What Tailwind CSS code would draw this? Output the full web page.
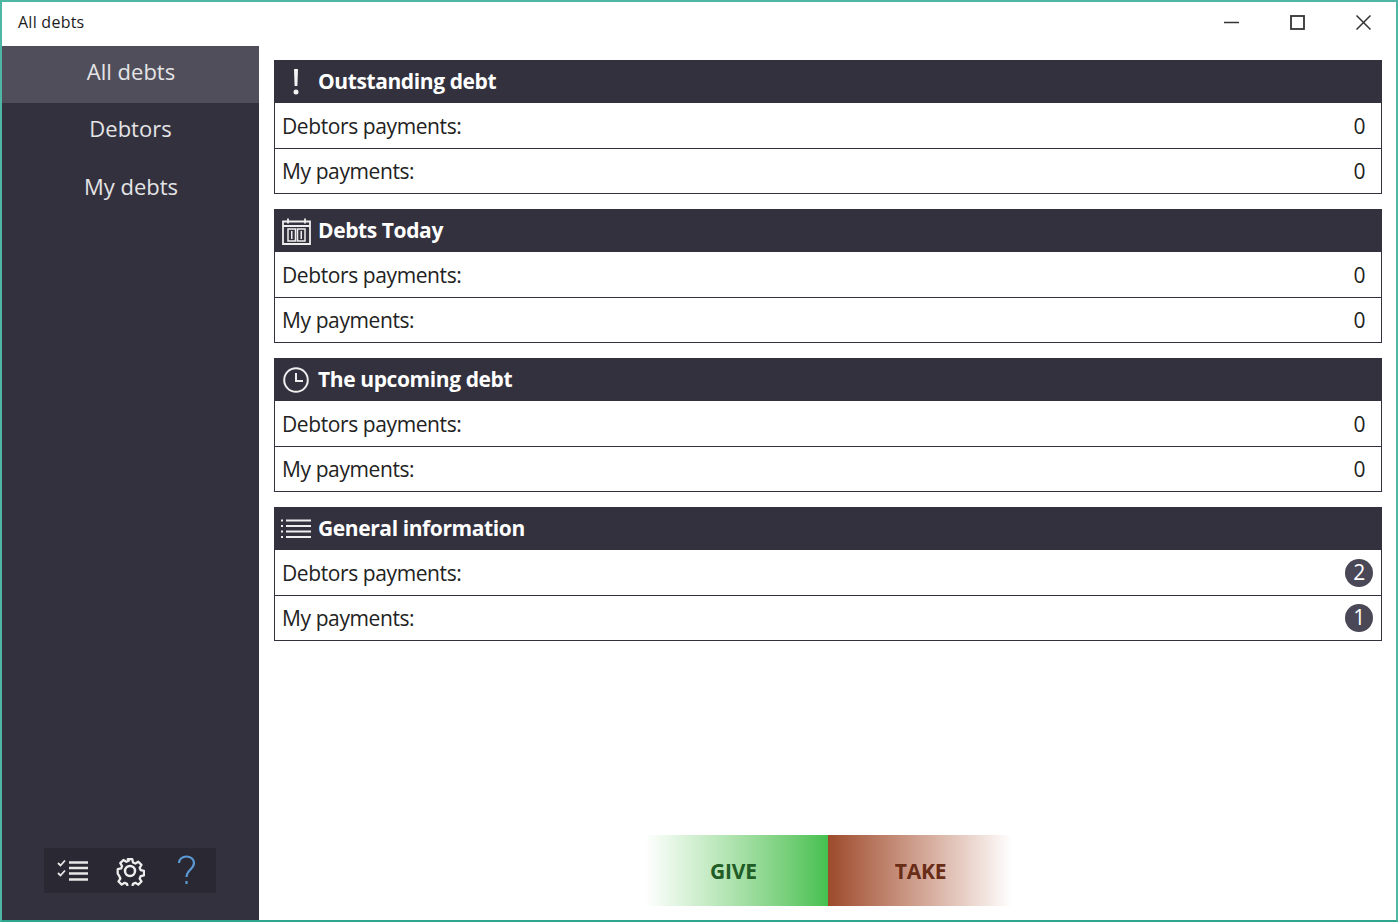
<!DOCTYPE html>
<html lang="en">
<head>
  <meta charset="UTF-8" />
  <title>All debts</title>
  <script src="https://cdn.jsdelivr.net/npm/@tailwindcss/browser@4"></script>
</head>
<body class="bg-white font-['Open_Sans',sans-serif] text-[#222]">
  <div class="h-[922px] w-[1398px] flex flex-col overflow-hidden border-2 border-[#4fb5a5] border-b-[#2fa58f]">

    <!-- Title bar -->
    <div class="h-[44px] shrink-0 flex items-center justify-between pb-[3px]">
      <span class="ml-[16px] mb-[2px] text-[16px] tracking-[0.25px] text-[#1c1c1c]">All debts</span>
      <div class="flex items-center gap-[51px] mr-[25px]">
        <svg width="15" height="15" viewBox="0 0 15 15" fill="none" stroke="#333" stroke-width="1.5"><path d="M0 7.500h15"/></svg>
        <svg width="15" height="15" viewBox="0 0 15 15" fill="none" stroke="#333" stroke-width="1.8"><rect x="1" y="1" width="13" height="13"/></svg>
        <svg width="15" height="15" viewBox="0 0 15 15" fill="none" stroke="#333" stroke-width="1.5"><path d="M.5.500l14 14M14.500.500l-14 14"/></svg>
      </div>
    </div>

    <div class="flex-1 flex min-h-0">
      <!-- Sidebar -->
      <aside class="w-[257px] shrink-0 bg-[#33313d] flex flex-col items-center text-[22px] text-[#e4e4e6]">
        <div class="w-full h-[57px] flex items-center justify-center pb-[7px] pl-[1px] bg-[#504e5a]">All debts</div>
        <div class="w-full h-[57px] flex items-center justify-center pb-[7px]">Debtors</div>
        <div class="w-full h-[58px] flex items-center justify-center pb-[5px] pl-[1px]">My debts</div>
        <div class="mt-auto mb-[27px] self-start ml-[42px] w-[172px] h-[45px] bg-[#2a2832] flex items-center pl-[13px]">
          <svg class="mr-[26px]" width="32" height="26" viewBox="0 0 32 26" fill="none" stroke="#e8e8e8">
            <path stroke-width="1.800" d="M1 5l2.500 2.500L8 2.500M1 15l2.500 2.500L8 12.500"/>
            <path stroke-width="2.500" d="M12 4.500h19M12 10h19M12 15.500h19M12 21.500h19"/>
          </svg>
          <svg class="mr-[31px]" width="30" height="30" viewBox="0 0 30 30" fill="none" stroke="#eee" stroke-width="2.500" stroke-linejoin="round">
            <circle cx="15" cy="15" r="5"/>
            <path d="M12.500 2h5l.8 3.700 2.600 1.100 3.200-2 3.500 3.500-2 3.200 1.100 2.600 3.700.8v5l-3.700.8-1.100 2.600 2 3.200-3.500 3.500-3.200-2-2.600 1.100-.8 3.700h-5l-.8-3.700-2.600-1.100-3.200 2-3.500-3.500 2-3.200-1.100-2.600L1.500 18v-5l3.700-.8 1.100-2.600-2-3.200 3.500-3.500 3.200 2 2.600-1.100z" transform="translate(1.350 1.350) scale(.91)"/>
          </svg>
          <svg width="22" height="32" viewBox="0 0 22 32" fill="none" stroke="#5b9bd5" stroke-width="2.200"><path d="M3 8c0-4 3.500-6.500 7.500-6.500S18 4 18 8c0 6-7.500 7-7.500 14"/><path d="M10.500 26v3"/></svg>
        </div>
      </aside>

      <!-- Main -->
      <main class="flex-1 flex flex-col pl-[15px] pr-[14px] pt-[14px] pb-[14px]">
        <section class="border border-[#33313d] mb-[15px]">
          <div class="h-[42px] bg-[#33313d] flex items-center text-white font-bold text-[21px] tracking-[-0.4px]">
            <span class="w-[43px] pr-[2px] flex justify-center"><svg width="6" height="26" viewBox="0 0 6 26" fill="#f4f4f4"><path d="M1 0h4l-.6 17H1.600z"/><circle cx="3" cy="23" r="2.500"/></svg></span>Outstanding debt
          </div>
          <div class="h-[46px] flex items-center justify-between pt-[2px] pl-[7px] pr-[16px] text-[21px] tracking-[-0.4px] border-b border-[#33313d]"><span>Debtors payments:</span><span>0</span></div>
          <div class="h-[44px] flex items-center justify-between pt-[2px] pl-[7px] pr-[16px] text-[21px] tracking-[-0.4px]"><span>My payments:</span><span>0</span></div>
        </section>

        <section class="border border-[#33313d] mb-[15px]">
          <div class="h-[42px] bg-[#33313d] flex items-center text-white font-bold text-[21px] tracking-[-0.4px]">
            <span class="w-[43px] flex justify-center"><svg width="29" height="27" viewBox="0 0 29 27" fill="none" stroke="#eee" stroke-width="1.800"><path d="M1 3.500h27v22.500H1zM1 8h27M6 .5v5M23 .5v5"/><path d="M6 11h7.500v12H6zM15.500 11H23v12h-7.500z" stroke-width="1.500"/><path d="M9.750 13v8M19.250 13v8" stroke-width="1.500"/></svg></span>Debts Today
          </div>
          <div class="h-[46px] flex items-center justify-between pt-[2px] pl-[7px] pr-[16px] text-[21px] tracking-[-0.4px] border-b border-[#33313d]"><span>Debtors payments:</span><span>0</span></div>
          <div class="h-[44px] flex items-center justify-between pt-[2px] pl-[7px] pr-[16px] text-[21px] tracking-[-0.4px]"><span>My payments:</span><span>0</span></div>
        </section>

        <section class="border border-[#33313d] mb-[15px]">
          <div class="h-[42px] bg-[#33313d] flex items-center text-white font-bold text-[21px] tracking-[-0.4px]">
            <span class="w-[43px] pr-[2px] flex justify-center"><svg width="26" height="26" viewBox="0 0 26 26" fill="none" stroke="#eee" stroke-width="2"><circle cx="13" cy="13" r="11.800"/><path d="M13 6v8h7"/></svg></span>The upcoming debt
          </div>
          <div class="h-[46px] flex items-center justify-between pt-[2px] pl-[7px] pr-[16px] text-[21px] tracking-[-0.4px] border-b border-[#33313d]"><span>Debtors payments:</span><span>0</span></div>
          <div class="h-[44px] flex items-center justify-between pt-[2px] pl-[7px] pr-[16px] text-[21px] tracking-[-0.4px]"><span>My payments:</span><span>0</span></div>
        </section>

        <section class="border border-[#33313d]">
          <div class="h-[42px] bg-[#33313d] flex items-center text-white font-bold text-[21px] tracking-[-0.4px]">
            <span class="w-[43px] pr-[1px] flex justify-center"><svg width="30" height="20" viewBox="0 0 30 20" fill="none" stroke="#eee" stroke-width="2"><path d="M5 1.500h25M5 7h25M5 12.500h25M5 18h25"/><path d="M0 1.500h2M0 7h2M0 12.500h2M0 18h2"/></svg></span>General information
          </div>
          <div class="h-[46px] flex items-center justify-between pl-[7px] pr-[8px] text-[21px] tracking-[-0.4px] border-b border-[#33313d]"><span class="pt-[2px]">Debtors payments:</span><span class="w-[28px] h-[28px] rounded-full bg-[#4a4856] text-white flex items-center justify-center">2</span></div>
          <div class="h-[44px] flex items-center justify-between pl-[7px] pr-[8px] text-[21px] tracking-[-0.4px]"><span class="pt-[2px]">My payments:</span><span class="w-[28px] h-[28px] rounded-full bg-[#4a4856] text-white flex items-center justify-center">1</span></div>
        </section>

        <!-- Give / Take -->
        <div class="mt-auto flex justify-center text-[21px] font-bold tracking-[-0.2px]">
          <div class="w-[183px] h-[71px] flex items-center justify-center pt-[2px] pr-[5px] bg-gradient-to-r from-white to-[#44c04f] text-[#1f5c26]">GIVE</div>
          <div class="w-[184px] h-[71px] flex items-center justify-center pt-[2px] pl-[2px] bg-gradient-to-r from-[#9c4a2a] to-white text-[#682c17]">TAKE</div>
        </div>
      </main>
    </div>
  </div>
</body>
</html>
